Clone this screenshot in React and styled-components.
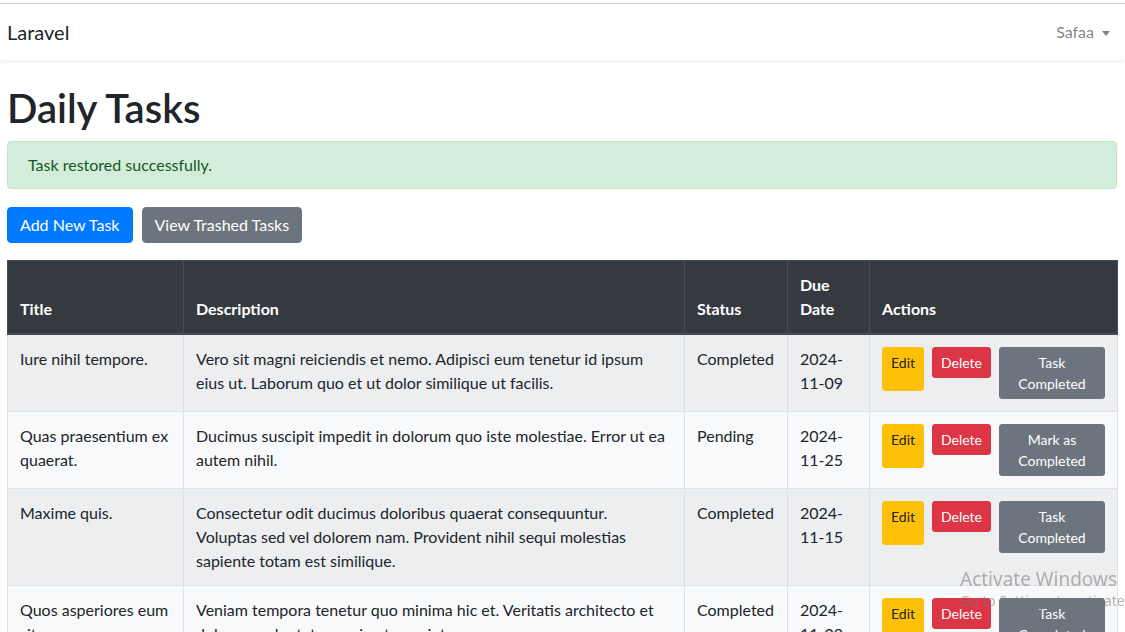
import styled, { createGlobalStyle } from "styled-components";

const Global = createGlobalStyle`
  html, body { overflow: hidden; }
  body {
    margin: 0;
    background: #fff;
    color: #212529;
    font-family: Lato, "Noto Sans", sans-serif;
    font-size: 16px;
    line-height: 1.5;
  }
  * { box-sizing: border-box; }
`

const TopLine = styled.div`
  height: 4px;
  border-bottom: 1px solid #cfcfcf;
`

const Navbar = styled.nav`
  display: flex;
  align-items: center;
  justify-content: space-between;
  height: 56px;
  padding: 0 15px 0 7px;
  background: #fff;
  box-shadow: 0 2px 4px rgba(0, 0, 0, 0.075);
`

const Brand = styled.span`
  font-size: 20px;
  color: #212529;
`

const UserMenu = styled.span`
  display: flex;
  align-items: center;
  gap: 8px;
  color: rgba(0, 0, 0, 0.5);
  font-size: 16px;
`

const Caret = styled.span`
  width: 0;
  height: 0;
  border-top: 5px solid rgba(0, 0, 0, 0.5);
  border-left: 4.5px solid transparent;
  border-right: 4.5px solid transparent;
  margin-top: 2px;
`

const Main = styled.main`
  padding: 24px 8px 0 7px;
`

const Heading = styled.h1`
  margin: 0 0 9px;
  font-size: 40px;
  font-weight: 600;
  line-height: 1.2;
`

const Alert = styled.div`
  padding: 11px 20px;
  margin-bottom: 18px;
  background: #d4edda;
  border: 1px solid #c3e6cb;
  border-radius: 4px;
  color: #155724;
`

const ButtonRow = styled.div`
  display: flex;
  gap: 9px;
  margin-bottom: 17px;
`

const colors = {
  primary: ["#007bff", "#fff"],
  secondary: ["#6c757d", "#fff"],
  warning: ["#ffc107", "#212529"],
  danger: ["#dc3545", "#fff"],
}

const Button = styled.button`
  font-family: inherit;
  font-size: 16px;
  line-height: 1.5;
  padding: 5px 12px;
  border: 1px solid ${p => colors[p.$variant][0]};
  background: ${p => colors[p.$variant][0]};
  color: ${p => colors[p.$variant][1]};
  border-radius: 4px;
`

const SmallButton = styled.button`
  font-family: inherit;
  font-size: 14px;
  line-height: 1.5;
  padding: 4px 8px ${p => (p.$tall ? "17px" : "4px")};
  border: 1px solid ${p => colors[p.$variant][0]};
  background: ${p => colors[p.$variant][0]};
  color: ${p => colors[p.$variant][1]};
  border-radius: 3px;
  flex: ${p => (p.$grow ? 1 : "none")};
  text-align: center;
`

const Table = styled.table`
  width: 1110px;
  border-collapse: collapse;
  table-layout: fixed;
`

const Th = styled.th`
  background: #343a40;
  color: #fff;
  text-align: left;
  vertical-align: bottom;
  padding: 12px;
  border: 1px solid #454d55;
  border-bottom-width: 2px;
  font-weight: 700;
`

const Row = styled.tr`
  background: ${p => (p.$odd ? "#eceef0" : "#f8f9fa")};
`

const Td = styled.td`
  padding: 12px ${p => (p.$wide ? "15px" : "12px")} 12px 12px;
  vertical-align: top;
  border: 1px solid #dee2e6;
`

const Actions = styled.div`
  display: flex;
  align-items: flex-start;
  gap: 8px;
`

const Watermark = styled.div`
  position: fixed;
  left: 960px;
  top: 566px;
  color: rgba(120, 120, 120, 0.55);
  white-space: nowrap;
  pointer-events: none;
  font-family: "Noto Sans", sans-serif;
`

const WmTitle = styled.div`
  font-size: 19px;
  line-height: 26px;
`

const WmSub = styled.div`
  font-size: 14px;
  line-height: 18px;
`

const tasks = [
  {
    title: "Iure nihil tempore.",
    desc: "Vero sit magni reiciendis et nemo. Adipisci eum tenetur id ipsum eius ut. Laborum quo et ut dolor similique ut facilis.",
    status: "Completed",
    due: "2024-11-09",
  },
  {
    title: "Quas praesentium ex quaerat.",
    desc: "Ducimus suscipit impedit in dolorum quo iste molestiae. Error ut ea autem nihil.",
    status: "Pending",
    due: "2024-11-25",
  },
  {
    title: "Maxime quis.",
    desc: "Consectetur odit ducimus doloribus quaerat consequuntur. Voluptas sed vel dolorem nam. Provident nihil sequi molestias sapiente totam est similique.",
    status: "Completed",
    due: "2024-11-15",
  },
  {
    title: "Quos asperiores eum sit.",
    desc: "Veniam tempora tenetur quo minima hic et. Veritatis architecto et dolorem voluptatem quia ut eveniet.",
    status: "Completed",
    due: "2024-11-02",
  },
]

export default function App() {
  return (
    <>
      <Global />
      <TopLine />
      <Navbar>
        <Brand>Laravel</Brand>
        <UserMenu>Safaa <Caret /></UserMenu>
      </Navbar>
      <Main>
        <Heading>Daily Tasks</Heading>
        <Alert>Task restored successfully.</Alert>
        <ButtonRow>
          <Button $variant="primary">Add New Task</Button>
          <Button $variant="secondary">View Trashed Tasks</Button>
        </ButtonRow>
        <Table>
          <colgroup>
            <col style={{ width: 176 }} />
            <col style={{ width: 501 }} />
            <col style={{ width: 103 }} />
            <col style={{ width: 82 }} />
            <col style={{ width: 248 }} />
          </colgroup>
          <thead>
            <tr>
              <Th>Title</Th>
              <Th>Description</Th>
              <Th>Status</Th>
              <Th>Due Date</Th>
              <Th>Actions</Th>
            </tr>
          </thead>
          <tbody>
            {tasks.map((t, i) => (
              <Row key={i} $odd={i % 2 === 0}>
                <Td>{t.title}</Td>
                <Td $wide>{t.desc}</Td>
                <Td>{t.status}</Td>
                <Td>{t.due}</Td>
                <Td>
                  <Actions>
                    <SmallButton $variant="warning" $tall>Edit</SmallButton>
                    <SmallButton $variant="danger">Delete</SmallButton>
                    <SmallButton $variant="secondary" $grow>
                      {t.status === "Pending" ? "Mark as Completed" : "Task Completed"}
                    </SmallButton>
                  </Actions>
                </Td>
              </Row>
            ))}
          </tbody>
        </Table>
      </Main>
      <Watermark>
        <WmTitle>Activate Windows</WmTitle>
        <WmSub>Go to Settings to activate Windows.</WmSub>
      </Watermark>
    </>
  )
}
